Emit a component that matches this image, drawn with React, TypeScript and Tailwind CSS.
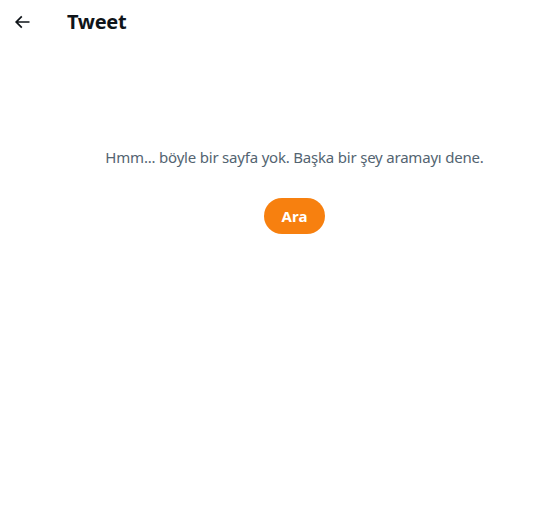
import React from 'react';

const App: React.FC = () => {
  return (
    <div className="min-h-[518px] bg-white font-['Noto_Sans',sans-serif] text-[#0f1419]">
      {/* Header */}
      <div className="flex h-[44px] items-center px-[12px]">
        <button className="flex h-[20px] w-[20px] items-center justify-center">
          <svg viewBox="0 0 24 24" className="h-[20px] w-[20px]" fill="currentColor">
            <path d="M7.414 13l5.043 5.04-1.414 1.42L3.586 12l7.457-7.46 1.414 1.42L7.414 11H21v2H7.414z" />
          </svg>
        </button>
        <h1 className="ml-[35px] text-[20px] font-bold leading-6 tracking-[-0.3px]">Tweet</h1>
      </div>

      {/* Empty state */}
      <div className="flex flex-col items-center pl-[40px] pt-[103px]">
        <p className="text-[15px] leading-5 tracking-[-0.2px] text-[#536471]">
          Hmm... böyle bir sayfa yok. Başka bir şey aramayı dene.
        </p>
        <button className="mt-[31px] h-[36px] rounded-full bg-[#f7800f] px-[18px] text-[15px] font-bold text-white">
          Ara
        </button>
      </div>
    </div>
  );
};

export default App;
